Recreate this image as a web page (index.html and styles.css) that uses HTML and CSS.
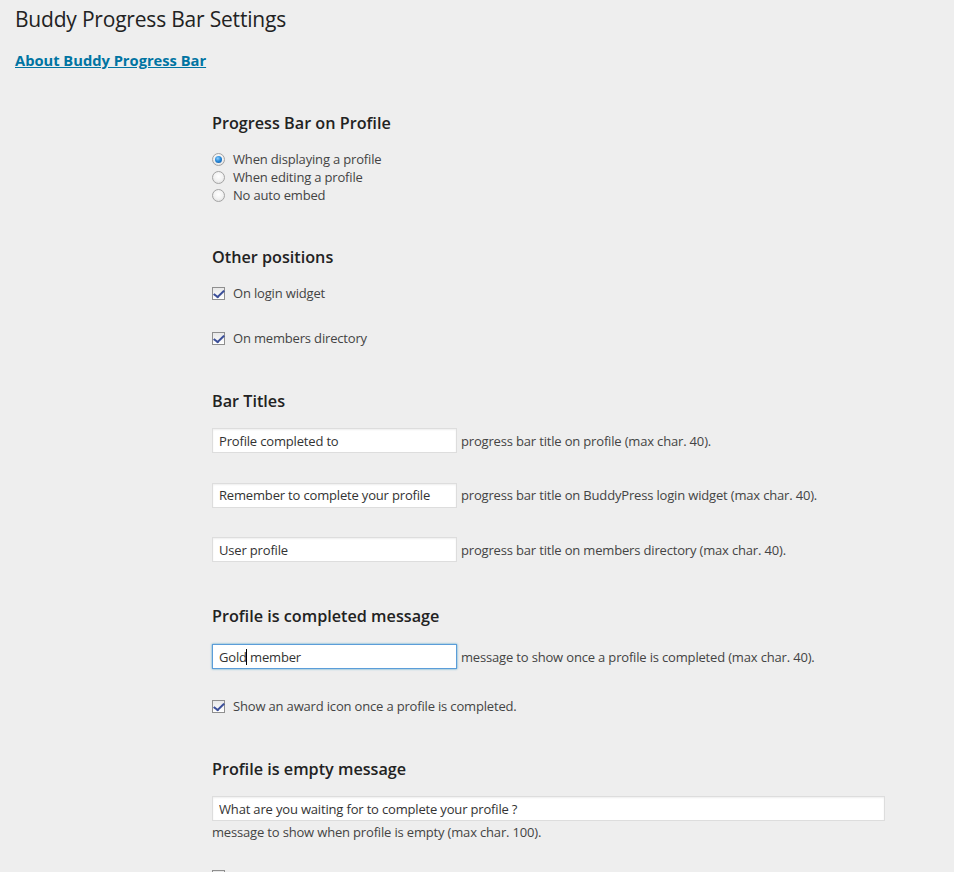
FILE: index.html
```html
<!DOCTYPE html>
<html lang="en">
<head>
<meta charset="utf-8">
<title>Buddy Progress Bar Settings</title>
<link rel="stylesheet" href="styles.css">
</head>
<body>
<div class="wrap">
  <h2 class="page-title">Buddy Progress Bar Settings</h2>
  <p class="about"><a href="#">About Buddy Progress Bar</a></p>

  <div class="settings">
    <section class="sec">
      <h3>Progress Bar on Profile</h3>
      <div class="radios">
        <label class="opt"><span class="radio checked"></span>When displaying a profile</label>
        <label class="opt"><span class="radio"></span>When editing a profile</label>
        <label class="opt"><span class="radio"></span>No auto embed</label>
      </div>
    </section>

    <section class="sec">
      <h3>Other positions</h3>
      <div class="checks">
        <label class="opt"><span class="check on"></span>On login widget</label>
        <label class="opt"><span class="check on"></span>On members directory</label>
      </div>
    </section>

    <section class="sec sec-titles">
      <h3>Bar Titles</h3>
      <div class="fields">
        <div class="field"><input class="txt" type="text" value="Profile completed to"><span class="desc">progress bar title on profile (max char. 40).</span></div>
        <div class="field"><input class="txt" type="text" value="Remember to complete your profile"><span class="desc">progress bar title on BuddyPress login widget (max char. 40).</span></div>
        <div class="field"><input class="txt" type="text" value="User profile"><span class="desc">progress bar title on members directory (max char. 40).</span></div>
      </div>
    </section>

    <section class="sec sec-completed">
      <h3>Profile is completed message</h3>
      <div class="field">
        <span class="focus-wrap"><input class="txt focused" type="text" value="Gold member"><span class="caret"></span></span>
        <span class="desc">message to show once a profile is completed (max char. 40).</span>
      </div>
      <label class="opt award"><span class="check on"></span>Show an award icon once a profile is completed.</label>
    </section>

    <section class="sec sec-empty">
      <h3>Profile is empty message</h3>
      <input class="txt wide" type="text" value="What are you waiting for to complete your profile ?">
      <p class="desc below">message to show when profile is empty (max char. 100).</p>
      <label class="opt last"><span class="check"></span></label>
    </section>
  </div>
</div>
</body>
</html>
```

FILE: styles.css
```css
html, body {
  margin: 0;
  padding: 0;
  background: #eeeeee;
}
body {
  font-family: "Open Sans", "Liberation Sans", sans-serif;
  font-size: 13px;
  letter-spacing: -0.17px;
  color: #444;
  overflow: hidden;
  height: 872px;
}
.wrap {
  padding: 0 15px;
}
.page-title {
  margin: 0;
  padding-top: 5px;
  font-size: 21px;
  letter-spacing: -0.2px;
  line-height: 29px;
  font-weight: 400;
  color: #222;
}
.about {
  margin: 16px 0 0;
  line-height: 20px;
  font-size: 14.7px;
  letter-spacing: 0;
  font-weight: 700;
}
.about a {
  color: #0074a2;
  text-decoration: underline;
}
.settings {
  margin-left: 197px;
  padding-top: 42px;
  display: flex;
  flex-direction: column;
  gap: 42px;
}
.sec h3 {
  margin: 0 0 16px;
  font-size: 16.2px;
  letter-spacing: 0;
  line-height: 22px;
  font-weight: 600;
  color: #222;
}
.sec-titles {
  margin-top: 1px;
}
.sec-completed {
  margin-top: 1px;
}
.sec-completed h3 {
  margin-bottom: 17px;
}
.sec-empty {
  margin-top: 1px;
}
.radios {
  display: flex;
  flex-direction: column;
}
.checks {
  display: flex;
  flex-direction: column;
  gap: 27px;
}
.opt {
  display: flex;
  align-items: center;
  line-height: 18px;
  height: 18px;
  color: #444;
}
.radio, .check {
  width: 13px;
  height: 13px;
  box-sizing: border-box;
  margin-right: 8px;
  flex: none;
}
.radio {
  border-radius: 50%;
  border: 1px solid #a4a4a4;
  background: radial-gradient(circle at 50% 40%, #ffffff 0%, #f2f2f2 50%, #d8d8d8 100%);
  position: relative;
}
.radio.checked::after {
  content: "";
  position: absolute;
  left: 2px;
  top: 2px;
  width: 7px;
  height: 7px;
  border-radius: 50%;
  background: radial-gradient(circle at 40% 35%, #8fd0ff 0%, #2a8ad8 45%, #0b4f9a 100%);
}
.check {
  border: 1px solid #8f8f8f;
  background: linear-gradient(#e8e8e8, #ffffff);
  position: relative;
}
.check.on::after {
  content: "";
  position: absolute;
  left: 3px;
  top: 0px;
  width: 4px;
  height: 8px;
  border-right: 2px solid #3b4f99;
  border-bottom: 2px solid #3b4f99;
  transform: rotate(38deg) skewX(-8deg);
}
.fields {
  display: flex;
  flex-direction: column;
  gap: 29.5px;
}
.field {
  display: flex;
  align-items: center;
  gap: 4px;
  height: 25px;
}
.txt {
  width: 245px;
  height: 25px;
  box-sizing: border-box;
  margin: 0;
  padding: 0 6px;
  border: 1px solid #dddddd;
  background: #fff;
  box-shadow: inset 0 1px 2px rgba(0,0,0,.07);
  font-family: "Open Sans", "Liberation Sans", sans-serif;
  font-size: 13px;
  letter-spacing: -0.17px;
  color: #333;
  outline: none;
}
.desc {
  color: #444;
  line-height: 18px;
}
.focus-wrap {
  position: relative;
  display: inline-block;
  height: 25px;
}
.txt.focused {
  border-color: #5b9dd9;
  box-shadow: 0 0 2px rgba(30,140,190,.8);
}
.caret {
  position: absolute;
  left: 34px;
  top: 5px;
  width: 1px;
  height: 16px;
  background: #000;
}
.award {
  margin-top: 28px;
}
.wide {
  width: 673px;
  display: block;
}
.below {
  margin: 2px 0 0;
}
.last {
  margin-top: 26px;
}
```
